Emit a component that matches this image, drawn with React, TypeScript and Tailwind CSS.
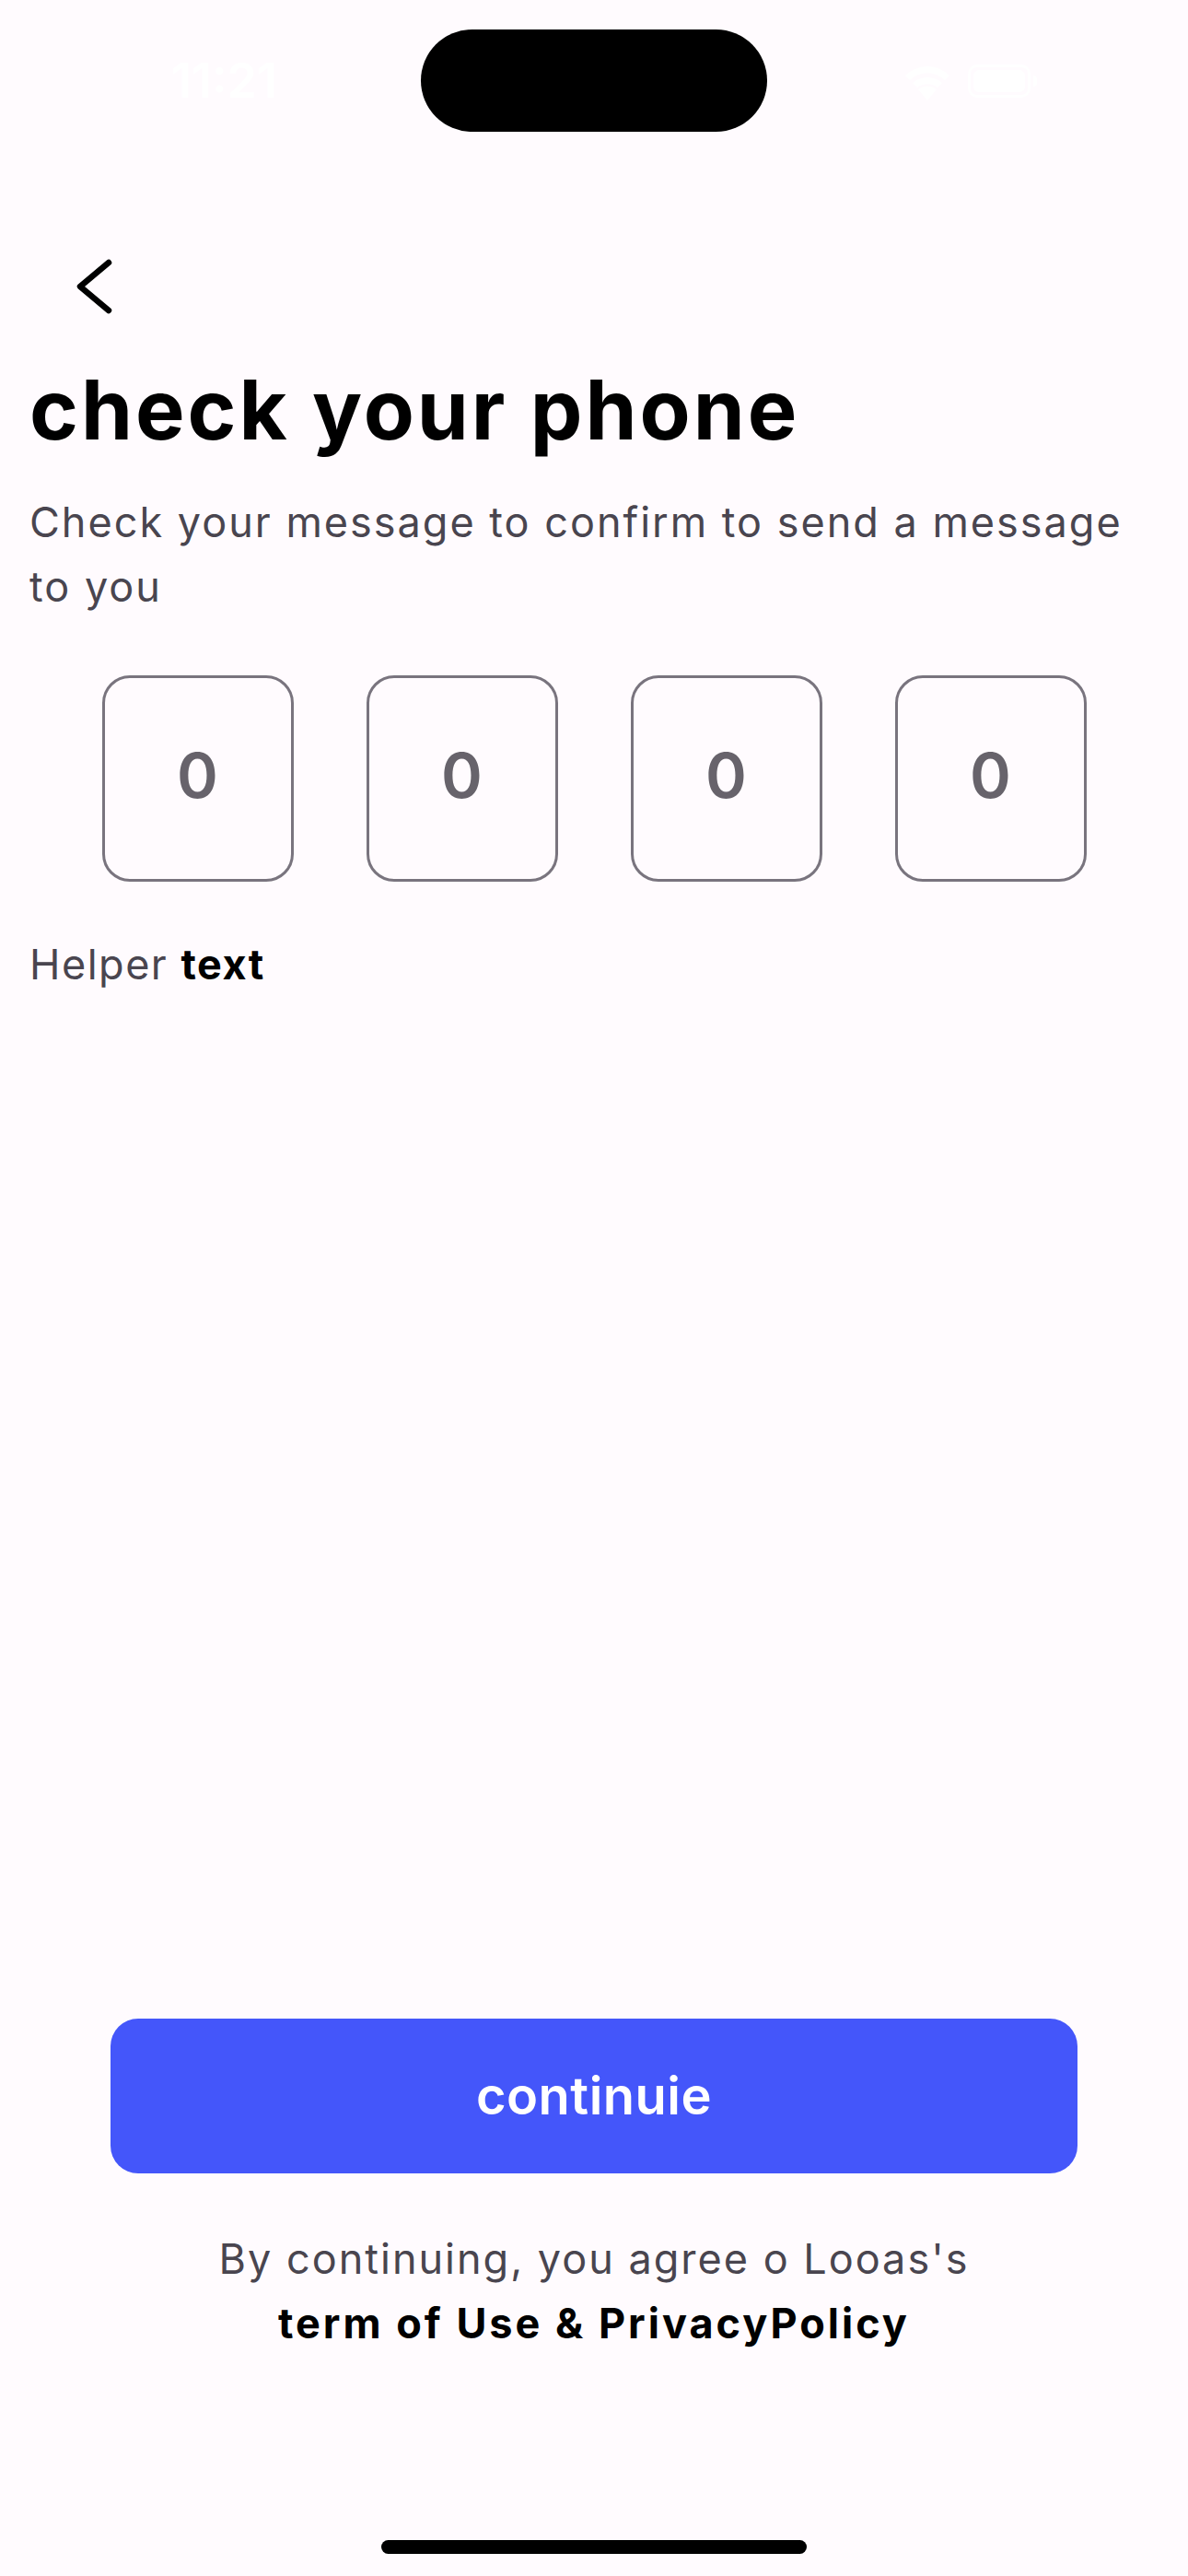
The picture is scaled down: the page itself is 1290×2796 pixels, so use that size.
import React from "react";

const font = { fontFamily: 'Inter, "Liberation Sans", sans-serif' };

function StatusBar() {
  return (
    <div className="grid h-[150px] grid-cols-[1fr_376px_1fr] items-start pt-[32px]">
      <div className="flex h-[111px] items-center justify-center pl-[30px]">
        <span className="text-[52px] font-semibold leading-none text-white">11:21</span>
      </div>
      <div className="h-[111px] w-[376px] rounded-full bg-black" />
      <div className="flex h-[111px] items-center justify-center gap-[14px] pr-[20px]">
        <svg width="60" height="42" viewBox="0 0 60 42" fill="white">
          <path d="M30 42 L20 30 A16 16 0 0 1 40 30 Z" />
          <path d="M14 23 A24 24 0 0 1 46 23 L41 28 A18 18 0 0 0 19 28 Z" />
          <path d="M6 15 A34 34 0 0 1 54 15 L49 20 A27 27 0 0 0 11 20 Z" />
        </svg>
        <div className="flex items-center gap-[3px]">
          <div className="h-[36px] w-[68px] rounded-[10px] border-[3px] border-white p-[3px]">
            <div className="h-full w-full rounded-[6px] bg-white" />
          </div>
          <div className="h-[12px] w-[4px] rounded-r-full bg-white" />
        </div>
      </div>
    </div>
  );
}

function OtpBox({ value }: { value: string }) {
  return (
    <div className="flex h-[224px] w-[208px] items-center justify-center rounded-[30px] border-[3px] border-[#79747E] pb-[8px]">
      <span className="text-[68px] font-semibold leading-none text-[#67636B]">{value}</span>
    </div>
  );
}

export default function App() {
  return (
    <div className="flex h-[2796px] w-[1290px] flex-col bg-[#FFFBFE]" style={font}>
      <StatusBar />

      <div className="mt-[125px] pl-[78px]">
        <svg width="48" height="72" viewBox="0 0 48 72" fill="none">
          <path
            d="M40 10 L9 36 L40 62"
            stroke="black"
            strokeWidth="6.5"
            strokeLinecap="round"
            strokeLinejoin="round"
          />
        </svg>
      </div>

      <h1 className="mt-[53px] px-[32px] text-[90px] font-bold leading-none tracking-[3px] text-black">
        check your phone
      </h1>

      <p className="mt-[42px] px-[32px] text-[45px] leading-[70px] tracking-[2px] text-[#49454F]">
        Check your message to confirm to send a message
        <br />
        to you
      </p>

      <div className="mt-[61px] flex justify-center gap-[79px]">
        <OtpBox value="0" />
        <OtpBox value="0" />
        <OtpBox value="0" />
        <OtpBox value="0" />
      </div>

      <p className="mt-[55px] px-[32px] text-[45px] leading-[70px] tracking-[1.5px] text-[#49454F]">
        Helper <span className="font-bold text-black">text</span>
      </p>

      <button className="mx-auto mt-auto flex h-[168px] w-[1050px] items-center justify-center rounded-[30px] bg-[#4456FA]">
        <span className="text-[56px] font-semibold tracking-[0.5px] text-white">continuie</span>
      </button>

      <div className="mt-[58px] text-center text-[45px] leading-[70px] tracking-[2px]">
        <p className="text-[#49454F]">By continuing, you agree o Looas's</p>
        <p className="font-bold tracking-[3px] text-black">term of Use &amp; PrivacyPolicy</p>
      </div>

      <div className="mx-auto mb-[24px] mt-[200px] h-[15px] w-[462px] rounded-full bg-black" />
    </div>
  );
}
